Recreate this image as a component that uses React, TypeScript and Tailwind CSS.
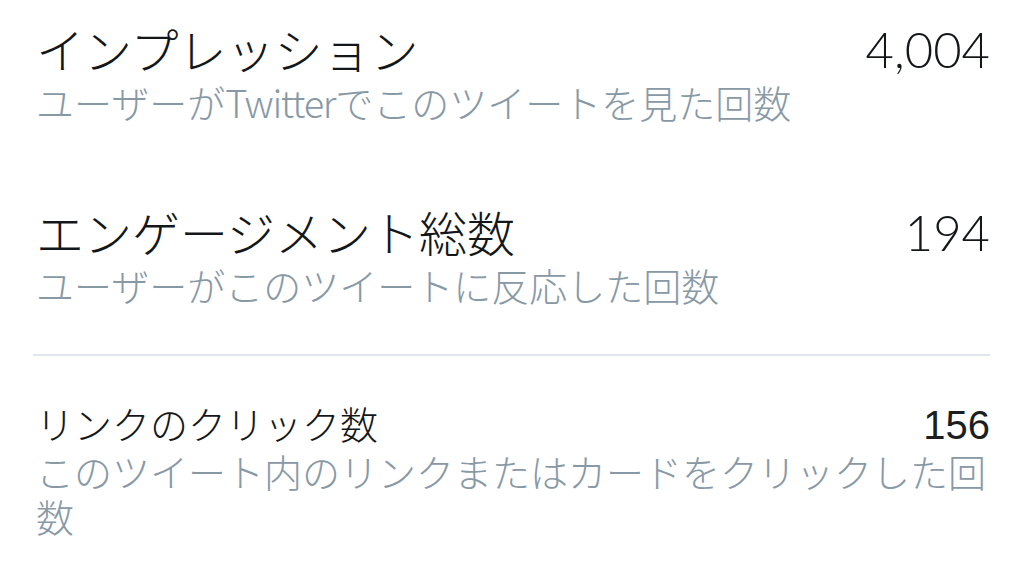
import React from "react";

const font = '"Noto Sans CJK JP", "Liberation Sans", sans-serif';
const numFont = '"Lato", "Liberation Sans", sans-serif';
const num2Font = '"Liberation Sans", sans-serif';

export default function App() {
  return (
    <div
      className="w-[1024px] h-[565px] bg-white overflow-hidden pl-[36px] pr-[34px]"
      style={{ fontFamily: font }}
    >
      <div className="pt-[20px]">
        <div className="flex items-start justify-between">
          <div className="text-[48px] leading-[56px] text-[#14171a] font-light">インプレッション</div>
          <div className="pt-[5px] text-[49px] leading-[48px] text-[#14171a] font-light" style={{ fontFamily: numFont }}>4,004</div>
        </div>
        <div className="text-[38px] leading-[52px] text-[#8899a6] font-light">
          ユーザーが<span className="tracking-[-1.3px]">Twitter</span>でこのツイートを見た回数
        </div>
      </div>
      <div className="pt-[75px]">
        <div className="flex items-start justify-between">
          <div className="text-[48px] leading-[56px] text-[#14171a] font-light">エンゲージメント総数</div>
          <div className="pt-[5px] text-[49px] leading-[48px] text-[#14171a] font-light" style={{ fontFamily: numFont }}>194</div>
        </div>
        <div className="text-[38px] leading-[52px] text-[#8899a6] font-light">
          ユーザーがこのツイートに反応した回数
        </div>
      </div>
      <div className="mt-[43px] h-[2px] bg-[#e1e6ec] -ml-[3px]" />
      <div className="pt-[44px]">
        <div className="flex items-start justify-between">
          <div className="text-[38px] leading-[46px] text-[#14171a] font-light">リンクのクリック数</div>
          <div className="pt-[4px] text-[40px] leading-[42px] text-[#1c1f22]" style={{ fontFamily: num2Font }}>156</div>
        </div>
        <div className="mt-[2px] text-[38px] leading-[45px] text-[#8899a6] font-light">
          このツイート内のリンクまたはカードをクリックした回数
        </div>
      </div>
    </div>
  );
}
